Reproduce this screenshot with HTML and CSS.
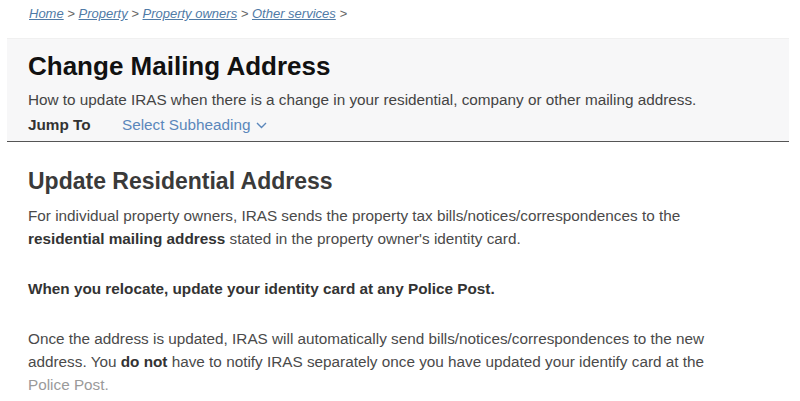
FILE: index.html
```html
<!DOCTYPE html>
<html lang="en">
<head>
  <meta charset="UTF-8">
  <meta name="viewport" content="width=device-width, initial-scale=1.0">
  <title>Change Mailing Address</title>
  <link rel="stylesheet" href="styles.css">
</head>
<body>
  <div class="breadcrumb">
    <a href="#">Home</a> &gt; <a href="#">Property</a> &gt; <a href="#">Property owners</a> &gt; <a href="#">Other services</a> &gt;
  </div>

  <div class="page-header">
    <h1>Change Mailing Address</h1>
    <p class="lead">How to update IRAS when there is a change in your residential, company or other mailing address.</p>
    <div class="jump">
      <span class="jump-label">Jump To</span>
      <span class="jump-select">Select Subheading
        <svg width="11" height="7" viewBox="0 0 11 7"><path d="M1 1 L5.5 5.5 L10 1" fill="none" stroke="#5b87bb" stroke-width="1.4"/></svg>
      </span>
    </div>
  </div>

  <div class="content">
    <h2>Update Residential Address</h2>
    <p>For individual property owners, IRAS sends the property tax bills/notices/correspondences to the <b>residential mailing address</b> stated in the property owner's identity card.</p>
    <p><b>When you relocate, update your identity card at any Police Post.</b></p>
    <p>Once the address is updated, IRAS will automatically send bills/notices/correspondences to the new address. You <b>do not</b> have to notify IRAS separately once you have updated your identify card at the <span class="faded">Police Post.</span></p>
  </div>
</body>
</html>
```

FILE: styles.css
```css
body {
  margin: 0;
  font-family: "Liberation Sans", Arial, sans-serif;
  background-color: #fff;
  color: #4a4a4a;
}
.breadcrumb {
  padding: 6px 0 0 29px;
  height: 38px;
  box-sizing: border-box;
  font-size: 13px;
  font-style: italic;
  color: #666;
}
.breadcrumb a {
  color: #4f7aa6;
}
.page-header {
  margin: 0 11px 0 7px;
  padding: 11px 0 0 21px;
  height: 104px;
  box-sizing: border-box;
  background-color: #f7f7f8;
  border-top: 1px solid #f0f0f0;
  border-bottom: 1px solid #555;
}
h1 {
  margin: 0;
  font-size: 26px;
  line-height: 32px;
  color: #111;
}
.lead {
  margin: 6px 0 0;
  font-size: 15.3px;
  line-height: 24px;
  color: #444;
}
.jump {
  display: flex;
  align-items: center;
  margin-top: 1px;
  font-size: 15.3px;
  line-height: 24px;
}
.jump-label {
  width: 94px;
  font-weight: bold;
  color: #333;
}
.jump-select {
  color: #5b87bb;
  display: flex;
  align-items: center;
  gap: 6px;
}
.content {
  padding: 25px 0 0 28px;
}
h2 {
  margin: 0 0 9px;
  font-size: 23px;
  line-height: 28px;
  color: #3a3a3a;
}
.content p {
  margin: 0 0 27px;
  font-size: 15.3px;
  line-height: 23px;
  max-width: 720px;
}
.content p:last-child {
  margin-bottom: 0;
}
.content b {
  color: #333;
}
.faded {
  color: #9a9a9a;
}
```
